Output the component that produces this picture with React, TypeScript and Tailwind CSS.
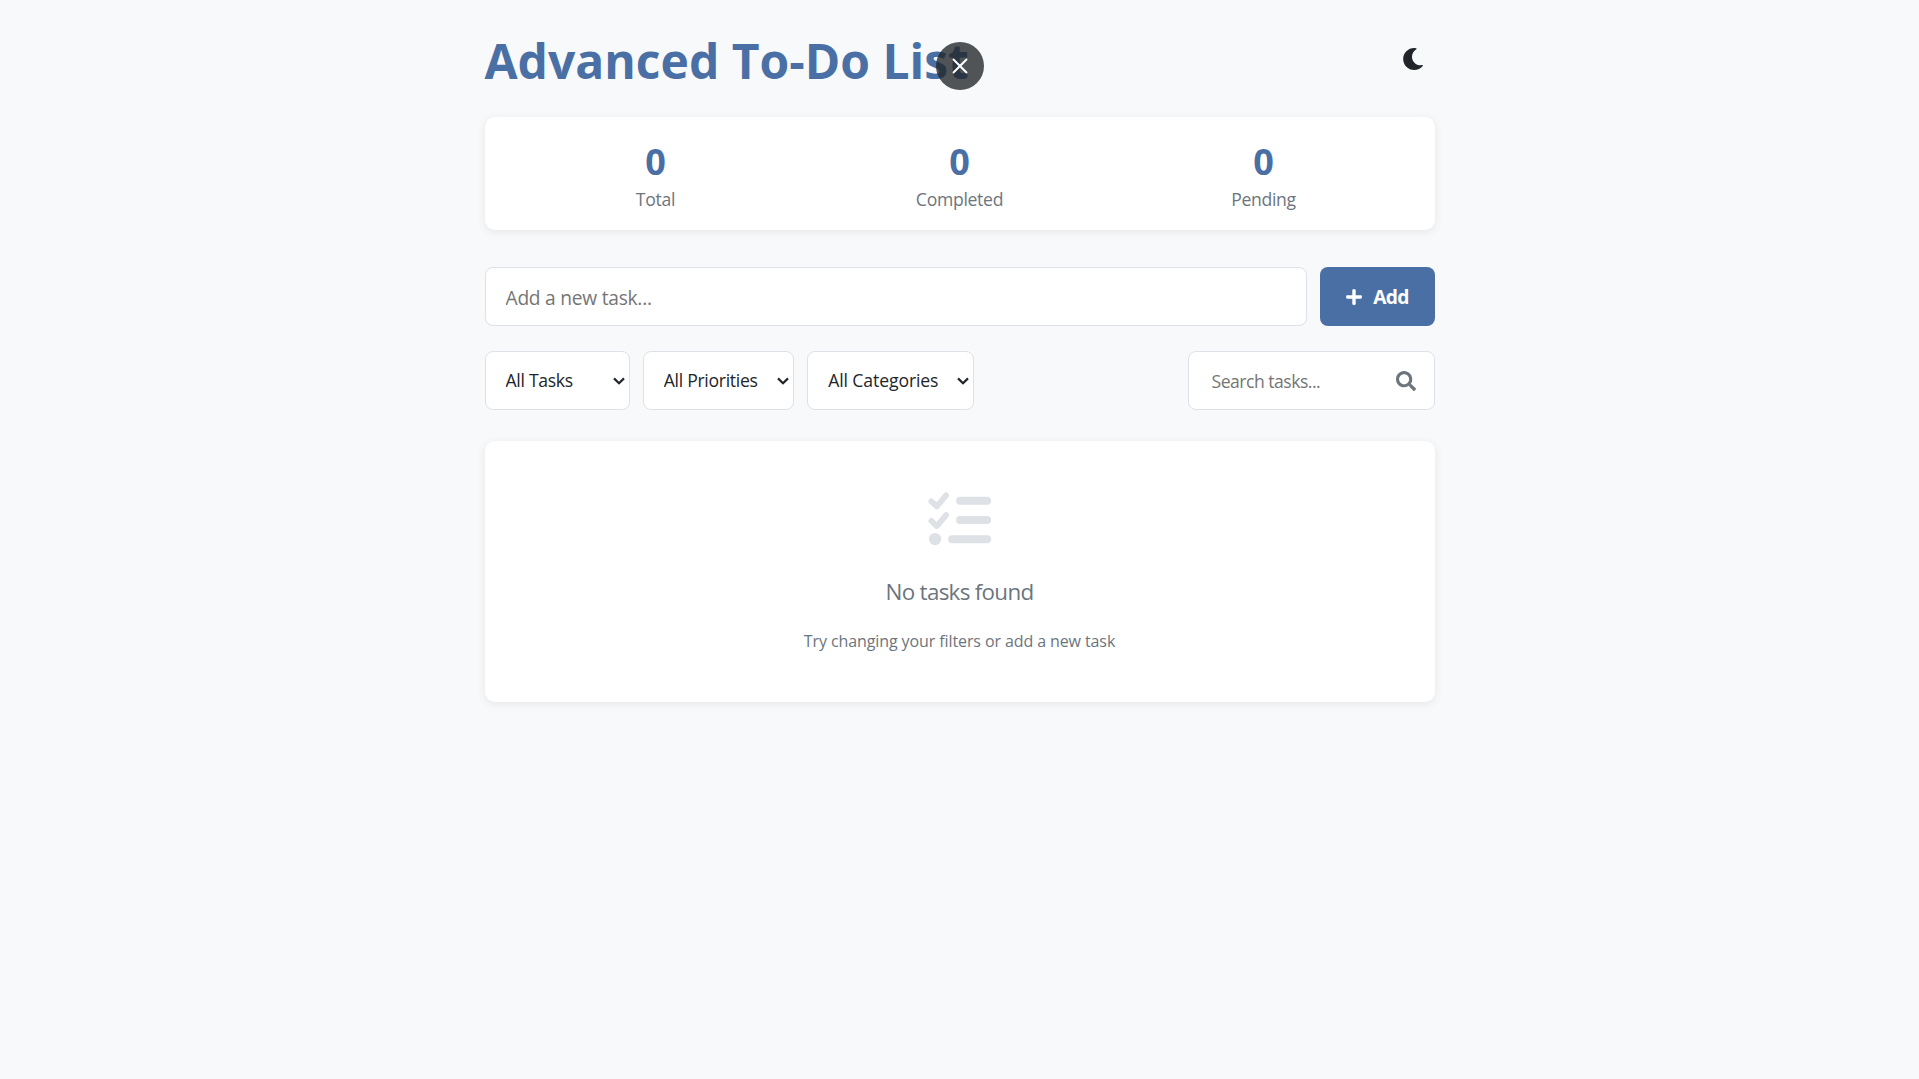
import { FaMoon, FaPlus, FaSearch } from "react-icons/fa";
import { X } from "lucide-react";

const font = { fontFamily: '"Open Sans", "Noto Sans", sans-serif' };

function Stat({ value, label }: { value: string; label: string }) {
  return (
    <div className="flex flex-1 flex-col items-center pt-[3px]">
      <div className="text-[36px] leading-[48px] font-bold text-[#4a6fa5]">{value}</div>
      <div className="text-[17.6px] leading-[26px] text-[#6c757d] tracking-[-0.3px]">{label}</div>
    </div>
  );
}

function Filter({ label, w }: { label: string; w: string }) {
  return (
    <div className={`relative ${w}`}>
      <select className="h-[59px] w-full appearance-none rounded-lg border border-[#dee2e6] bg-white pr-6 pl-5 text-[17.6px] text-[#212529]">
        <option>{label}</option>
      </select>
      <svg
        viewBox="0 0 12 8"
        className="pointer-events-none absolute top-[26px] right-[5px] h-[8px] w-[12px] text-[#212529]"
        fill="none"
        stroke="currentColor"
        strokeWidth="2.2"
      >
        <path d="M1 1.4 6 6.2 11 1.4" />
      </svg>
    </div>
  );
}

function EmptyIcon() {
  return (
    <svg viewBox="438 70 200 160" className="h-[55px] w-[69px] text-[#dee2e6]" fill="currentColor">
      <path d="M456 97 472 112 499 80" fill="none" stroke="currentColor" strokeWidth="17" strokeLinecap="round" strokeLinejoin="round" />
      <path d="M456 154 472 169 499 137" fill="none" stroke="currentColor" strokeWidth="17" strokeLinecap="round" strokeLinejoin="round" />
      <circle cx="467" cy="207" r="18" />
      <rect x="528" y="84" width="102" height="23" rx="11.5" />
      <rect x="528" y="140" width="102" height="23" rx="11.5" />
      <rect x="505" y="196" width="125" height="23" rx="11.5" />
    </svg>
  );
}

export default function App() {
  return (
    <div className="relative min-h-[1079px] bg-[#f8f9fa]" style={font}>
      <div className="mx-auto w-[950px] pt-[21px]">
        <header className="mb-[22px] flex h-[74px] items-start justify-between">
          <h1 className="mt-[3px] text-[48px] leading-[74px] font-bold text-[#4a6fa5]">Advanced To-Do List</h1>
          <button className="mt-[27px] mr-[11px] text-[#212529]">
            <FaMoon size={22} />
          </button>
        </header>

        <section className="flex h-[113px] items-center rounded-[10px] bg-white px-[19px] shadow-[0_2px_10px_rgba(0,0,0,0.08)]">
          <Stat value="0" label="Total" />
          <Stat value="0" label="Completed" />
          <Stat value="0" label="Pending" />
        </section>

        <div className="mt-[37px] flex gap-[13px]">
          <input
            placeholder="Add a new task..."
            className="h-[59px] flex-1 rounded-lg border border-[#dee2e6] bg-white px-[20px] pt-[2px] text-[19.2px] tracking-[-0.25px] text-[#212529] outline-none placeholder:text-[#757575]"
          />
          <button className="flex h-[59px] w-[115px] items-center justify-center gap-[10px] rounded-lg bg-[#4a6fa5] pt-[1px] text-[19.2px] font-bold tracking-[-0.6px] text-white">
            <FaPlus size={18} />
            Add
          </button>
        </div>

        <div className="mt-[25px] flex items-center">
          <div className="flex gap-[12.8px]">
            <Filter label="All Tasks" w="w-[145.5px] tracking-[-0.3px]" />
            <Filter label="All Priorities" w="w-[151.6px] tracking-[-0.3px]" />
            <Filter label="All Categories" w="w-[167px] tracking-[-0.1px]" />
          </div>
          <div className="relative ml-auto">
            <input
              placeholder="Search tasks..."
              className="h-[59px] w-[247px] rounded-lg border border-[#dee2e6] bg-white pr-[56px] pl-[23px] text-[17.6px] tracking-[-0.5px] text-[#212529] outline-none placeholder:text-[#757575]"
            />
            <FaSearch size={20} className="absolute top-[20px] right-[19px] text-[#6c757d]" />
          </div>
        </div>

        <section className="mt-[31px] flex h-[261px] flex-col items-center rounded-[10px] bg-white pt-[51px] shadow-[0_2px_10px_rgba(0,0,0,0.08)]">
          <EmptyIcon />
          <div className="mt-[28px] text-[22.4px] leading-[34px] text-[#6c757d] tracking-[-0.7px]">No tasks found</div>
          <div className="mt-[20px] text-[16px] leading-[24px] text-[#6c757d] tracking-[-0.1px]">Try changing your filters or add a new task</div>
        </section>
      </div>

      <button className="absolute top-[42px] left-[936px] flex h-[48px] w-[48px] items-center justify-center rounded-full bg-[rgba(33,37,41,0.78)] text-white">
        <X size={26} strokeWidth={1.8} />
      </button>
    </div>
  );
}
